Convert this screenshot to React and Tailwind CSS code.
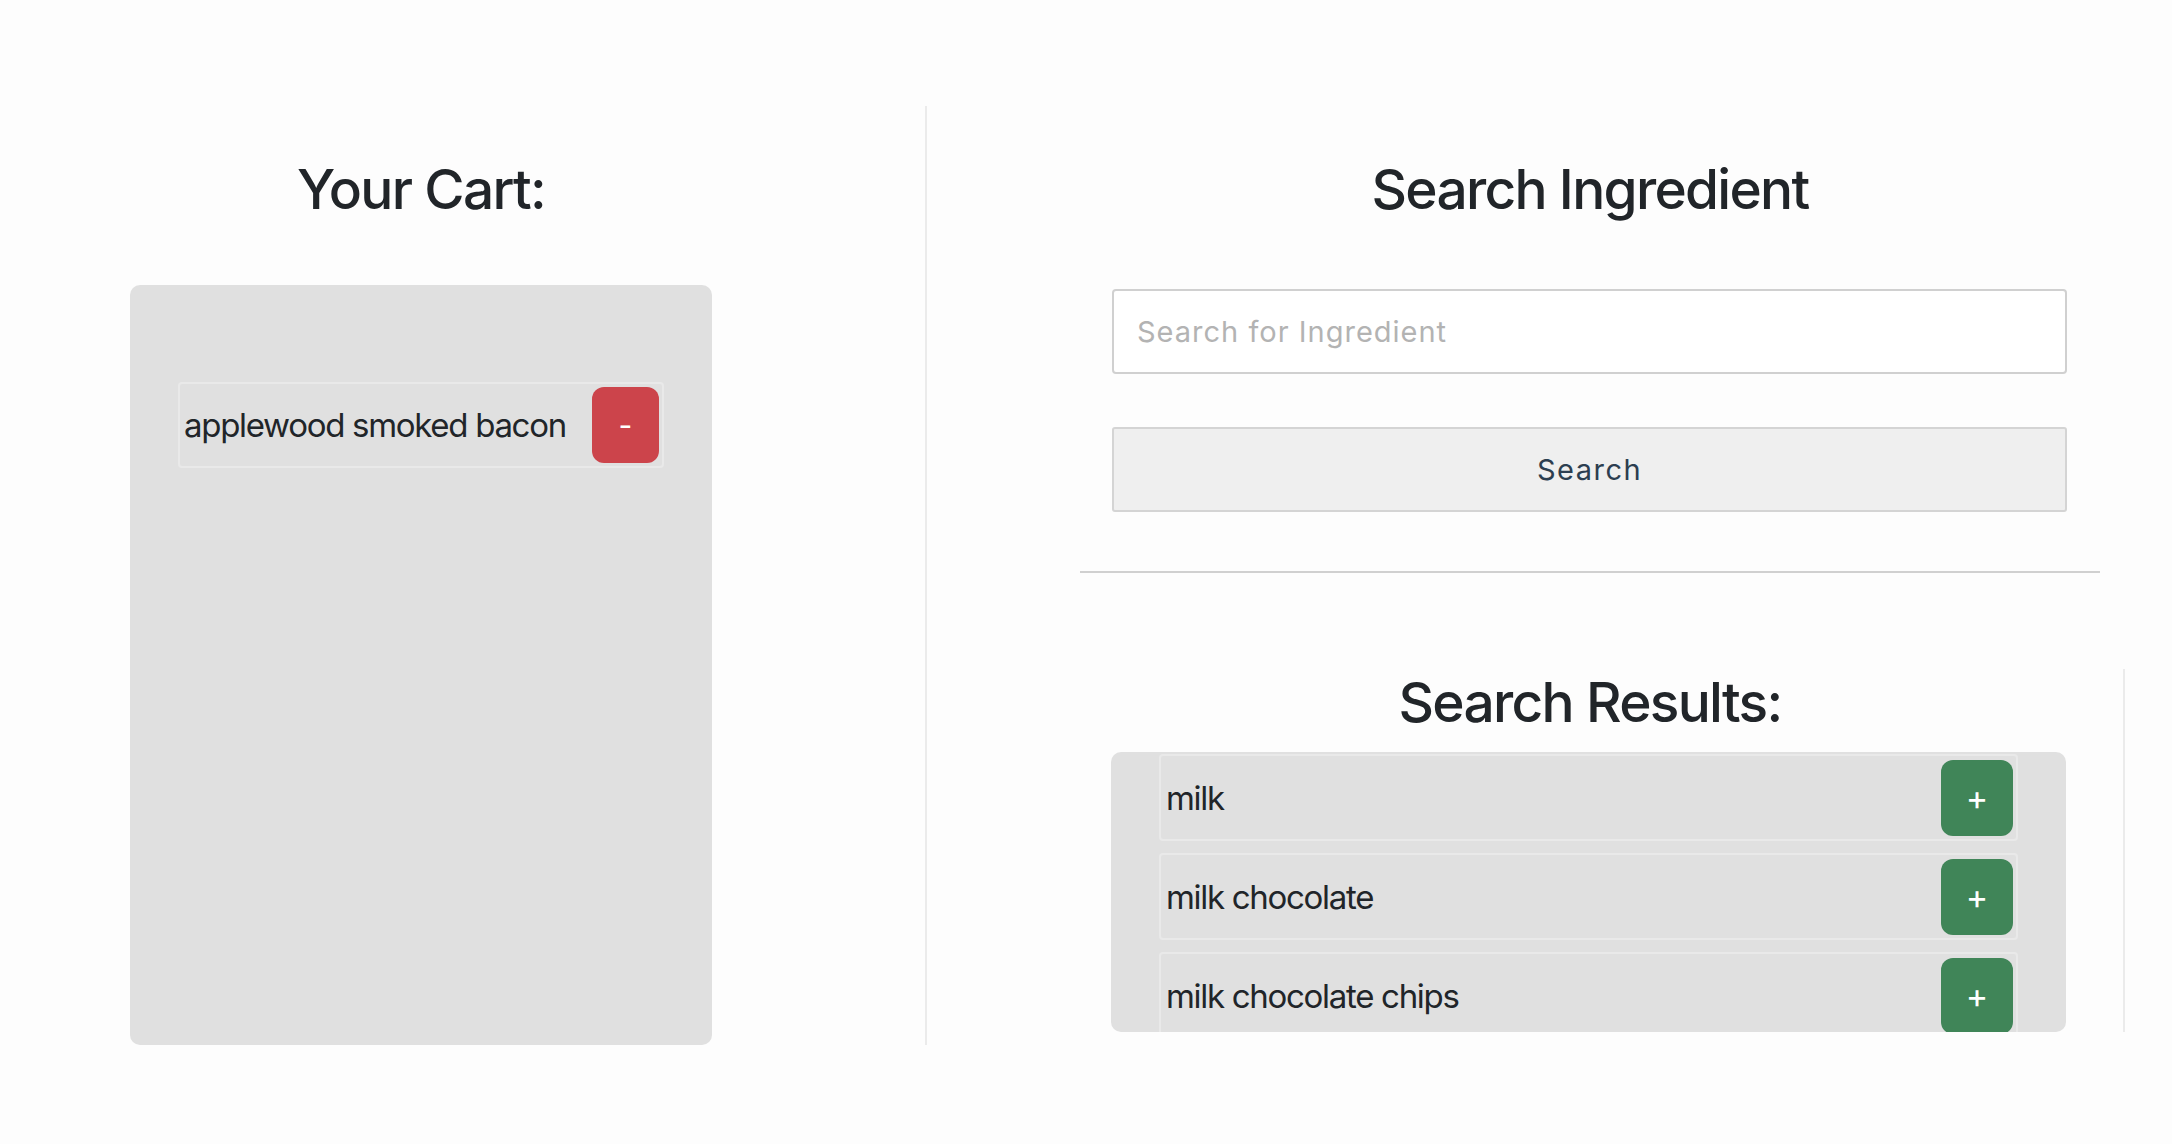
import { useState } from "react";

const results = ["milk", "milk chocolate", "milk chocolate chips"];

function CartItem({ name }) {
  return (
    <div className="flex h-[86px] items-center justify-between rounded-[4px] border-2 border-[#e9e9e9] pl-[4px] pr-[3px]">
      <span className="whitespace-nowrap text-[33px] leading-none tracking-[-1.3px]">{name}</span>
      <button className="flex h-[76px] w-[67px] shrink-0 items-center justify-center rounded-[12px] bg-[#cc444b] text-[30px] leading-none text-white">
        -
      </button>
    </div>
  );
}

function ResultItem({ name }) {
  return (
    <div className="flex h-[87px] shrink-0 items-center justify-between rounded-[4px] border-2 border-[#e9e9e9] pl-[5px] pr-[3px]">
      <span className="whitespace-nowrap pt-[2px] text-[33px] leading-none tracking-[-1.3px]">{name}</span>
      <button className="flex h-[76px] w-[72px] shrink-0 items-center justify-center rounded-[12px] bg-[#408558] text-[34px] leading-none text-white">
        +
      </button>
    </div>
  );
}

export default function App() {
  const [query, setQuery] = useState("");

  return (
    <div className="flex min-h-screen bg-[#fdfdfd] pt-[106px] font-['Inter',sans-serif] text-[#212529]">
      {/* cart column */}
      <div className="h-[939px] w-[927px] shrink-0 border-r-2 border-[#ebebeb] pl-[130px]">
        <div className="w-[582px]">
          <h1 className="mt-[50px] h-[66px] text-center text-[55px] font-medium leading-[66px] tracking-[-1.7px]">Your Cart:</h1>
          <div className="mt-[63px] h-[760px] rounded-[10px] bg-[#e0e0e0] px-[48px] pt-[97px]">
            <CartItem name="applewood smoked bacon" />
          </div>
        </div>
      </div>

      {/* search column */}
      <div className="pl-[153px]">
        <div className="w-[1020px]">
          <h1 className="mt-[50px] h-[66px] text-center text-[55px] font-medium leading-[66px] tracking-[-1.7px]">Search Ingredient</h1>
          <input
            value={query}
            onChange={(e) => setQuery(e.target.value)}
            placeholder="Search for Ingredient"
            className="mx-[32px] mt-[67px] block h-[85px] w-[955px] rounded-[4px] border-2 border-[#d0d0d0] bg-white px-[23px] text-[29px] tracking-[1px] outline-none placeholder:text-[#b3b3b3]"
          />
          <button className="mx-[32px] mt-[53px] block h-[85px] w-[955px] rounded-[3px] border-2 border-[#d4d4d4] bg-[#efefef] text-[29px] tracking-[1.5px] text-[#2c3e50]">
            Search
          </button>
          <div className="mt-[59px] h-[2px] bg-[#d0d0d0]" />
        </div>
        <div className="mt-[96px] w-[1045px] border-r-2 border-[#ebebeb] pr-[23px]">
          <h1 className="h-[67px] text-center text-[55px] font-medium leading-[66px] tracking-[-1.7px]">Search Results:</h1>
          <div className="ml-[31px] mt-[16px] flex h-[280px] w-[955px] flex-col gap-[12px] overflow-hidden rounded-[10px] bg-[#e0e0e0] px-[48px] pt-[2px]">
            {results.map((r) => (
              <ResultItem key={r} name={r} />
            ))}
          </div>
        </div>
      </div>
    </div>
  );
}
